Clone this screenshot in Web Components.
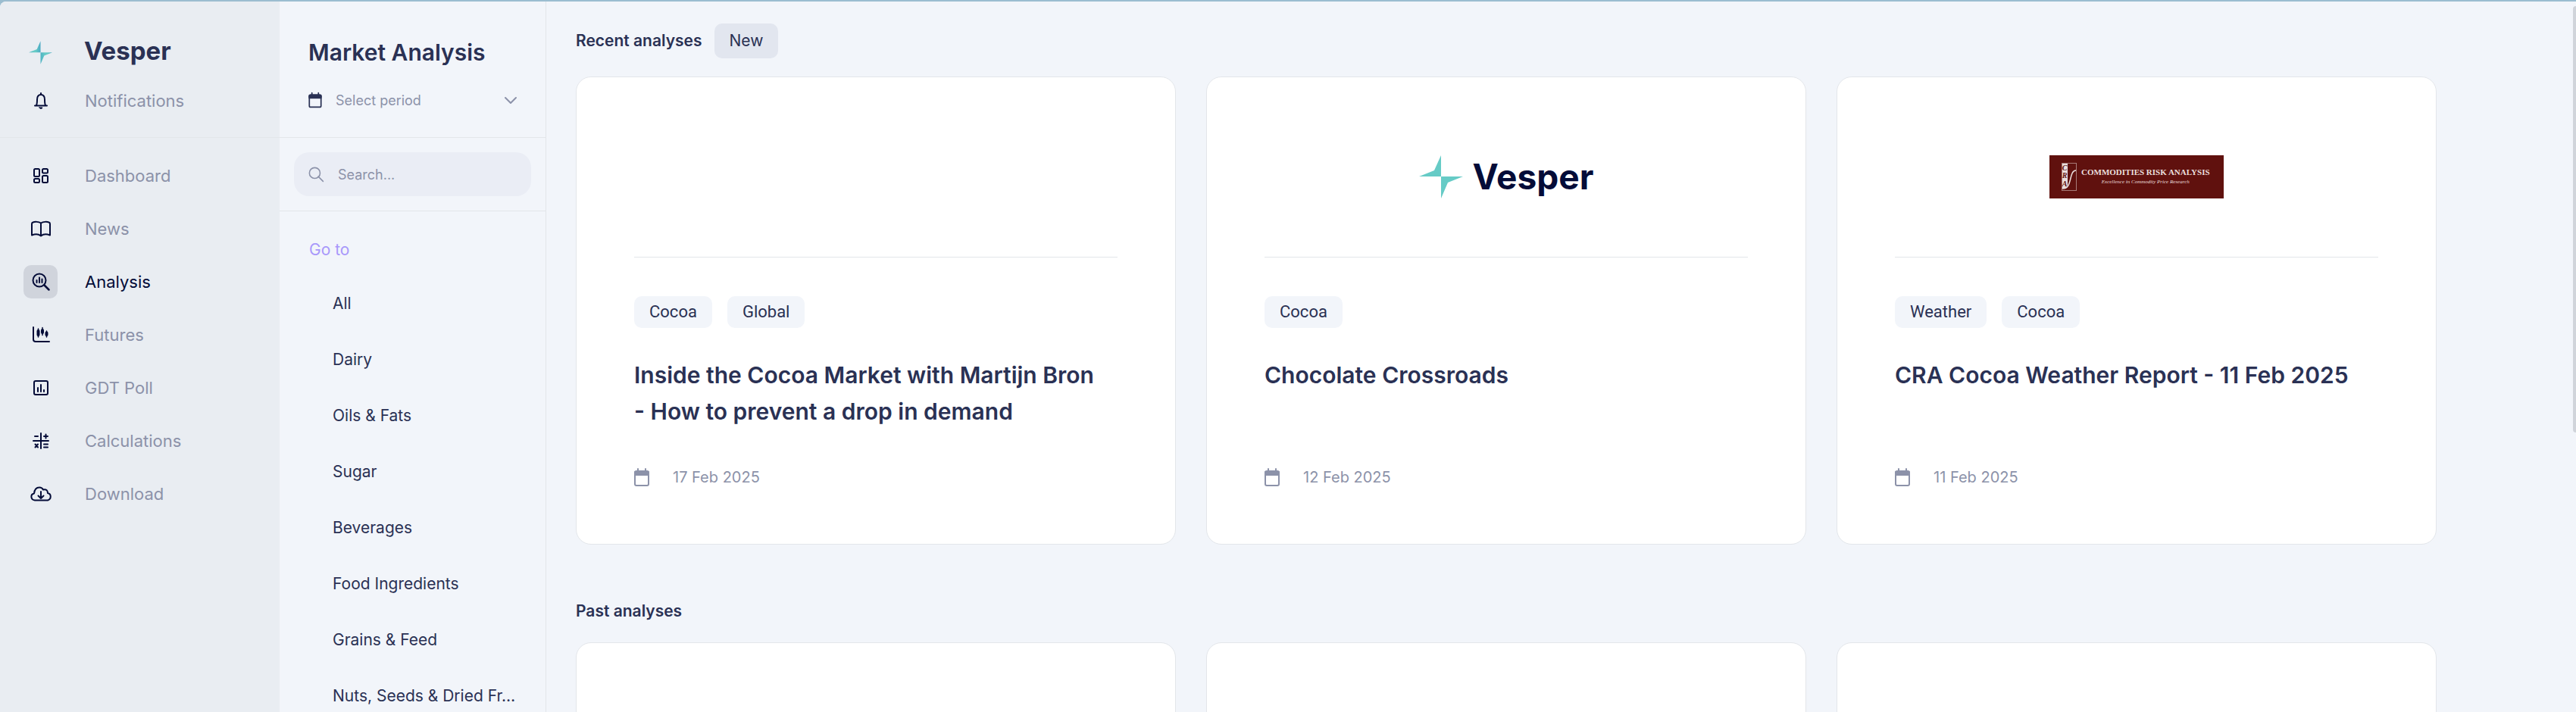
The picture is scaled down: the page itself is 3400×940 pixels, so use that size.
<!DOCTYPE html>
<html lang="en">
<head>
<meta charset="UTF-8">
<meta name="viewport" content="width=device-width, initial-scale=1.0">
<title>Vesper - Market Analysis</title>
<style>
    :root {
        --navy: #040c38;
        --ink: #2a3154;
        --muted: #8c92a9;
        --line: #e3e6ea;
        --page: #f2f5fa;
        --sidebar: #e9edf2;
        --teal: #66cbc6;
        --accent: #a898fa;
    }

    body {
        background: #9bbdd0;
        color: var(--ink);
        font-family: Inter, "Liberation Sans", sans-serif;
        font-size: 21px;
        margin: 0;
    }
</style>
</head>
<body>
<app-shell>
    <side-nav slot="nav">
        <nav-item slot="top" icon="bell">Notifications</nav-item>
        <nav-item icon="dashboard">Dashboard</nav-item>
        <nav-item icon="book">News</nav-item>
        <nav-item icon="analysis" active>Analysis</nav-item>
        <nav-item icon="candles">Futures</nav-item>
        <nav-item icon="poll">GDT Poll</nav-item>
        <nav-item icon="calc">Calculations</nav-item>
        <nav-item icon="cloud">Download</nav-item>
    </side-nav>

    <filter-panel slot="panel" heading="Market Analysis">
        <category-link>All</category-link>
        <category-link>Dairy</category-link>
        <category-link>Oils &amp; Fats</category-link>
        <category-link>Sugar</category-link>
        <category-link>Beverages</category-link>
        <category-link>Food Ingredients</category-link>
        <category-link>Grains &amp; Feed</category-link>
        <category-link>Nuts, Seeds &amp; Dried Fr…</category-link>
    </filter-panel>

    <analysis-section heading="Recent analyses" badge="New">
        <analysis-card tags="Cocoa,Global" date="17 Feb 2025">Inside the Cocoa Market with Martijn Bron - How to prevent a drop in demand</analysis-card>
        <analysis-card tags="Cocoa" date="12 Feb 2025">
            <vesper-logo slot="logo"></vesper-logo>
            Chocolate Crossroads
        </analysis-card>
        <analysis-card tags="Weather,Cocoa" date="11 Feb 2025">
            <cra-logo slot="logo"></cra-logo>
            CRA Cocoa Weather Report - 11 Feb 2025
        </analysis-card>
    </analysis-section>

    <analysis-section heading="Past analyses">
        <analysis-card></analysis-card>
        <analysis-card></analysis-card>
        <analysis-card></analysis-card>
    </analysis-section>
</app-shell>

<script>
const ICONS = {
    bell: `<path d="M14 4v2M6 20.500h16M8 20c1-2 1-4 1-7.500C9 8.500 11 6 14 6s5 2.500 5 6.500c0 3.500 0 5.500 1 7.500" fill="none"/><path d="M12 23h4c-.5 2-3.500 2-4 0z" fill="currentColor" stroke-width="1"/>`,
    dashboard: `<g fill="none"><rect x="5" y="5" width="7" height="10" rx="1.500"/><rect x="16" y="5" width="7" height="5.500" rx="1.500"/><rect x="5" y="18" width="7" height="5" rx="1.500"/><rect x="16" y="14" width="7" height="9" rx="1.500"/></g>`,
    book: `<path d="M14 6.500v17M14 6.500C11 4.500 6 4.500 3.500 5.500Q2 6 2 7.500v15c4-1.500 9-1.500 12 1 3-2.500 8-2.500 12-1v-15q0-1.500-1.500-2C22 4.500 17 4.500 14 6.500z" fill="none"/>`,
    analysis: `<g fill="none"><circle cx="12" cy="12" r="8.500"/><path d="M18.500 18.500l6 6" stroke-width="2.500"/><path d="M8.500 12v3M12 8.500v6.500M15.500 10.500v4.500"/></g>`,
    candles: `<path d="M4 4v16q0 3 3 3h18" fill="none"/><path d="M10.500 6v11M16 4.500v10M21.500 9v8" stroke-width="1.500"/><path d="M10.500 9v5M16 8v3M21.500 11.500v2.500" stroke-width="4"/>`,
    poll: `<g fill="none"><rect x="5" y="5" width="18" height="18" rx="2"/><path d="M10 14v5M14 10v9M18 17v2"/></g>`,
    calc: `<path d="M4 14h20M14 4v20M6 8h4M18 8h5M20.500 5.500v5M18 18.500h5M18 22.500h5M6.500 18.500l3.500 4M10 18.500l-3.500 4" fill="none"/>`,
    cloud: `<path d="M6 22.500c-6-1-6-8-1-9 .5-5 3-8 7-8 2.500 0 4 1 5 3 4-1 6 1 6 4.500 5 1 5 8 0 9.500zM14 11v9M10.500 16.500l3.500 3.500 3.500-3.500" fill="none"/>`,
    calendar: `<path d="M9 3v4M19 3v4M5 9h18" /><rect x="5" y="6" width="18" height="19" rx="2" fill="none"/><path d="M5 7h18v4H5z" fill="currentColor"/>`,
    chevron: `<path d="M7 11l7 7 7-7" fill="none"/>`,
    search: `<path d="M18 18l8 8" fill="none"/><circle cx="12" cy="12" r="9" fill="none"/>`
};

const STAR = `<path d="M29 0v28H0l20-8z"/><path d="M29 28h29l-20 8-9 21z"/>`;

class ShadowElement extends HTMLElement {
    constructor() {
        super();
        this.attachShadow({ mode: 'open' });
    }

    connectedCallback() {
        this.render();
    }
}

class AppIcon extends ShadowElement {
    render() {
        this.shadowRoot.innerHTML = `
            <style>
                :host {
                    display: block;
                    flex-shrink: 0;
                    height: 28px;
                    width: 28px;
                }

                svg {
                    display: block;
                    height: 100%;
                    overflow: visible;
                    stroke: currentColor;
                    stroke-linecap: round;
                    stroke-linejoin: round;
                    stroke-width: 2;
                    width: 100%;
                }
            </style>
            <svg viewBox="0 0 28 28" aria-hidden="true">${ICONS[this.getAttribute('name')]}</svg>
        `;
    }
}

class AppShell extends ShadowElement {
    render() {
        this.shadowRoot.innerHTML = `
            <style>
                :host {
                    background: var(--page);
                    border-radius: 8px 0 0 0;
                    box-sizing: border-box;
                    display: grid;
                    grid-template-columns: 369px 352px minmax(0, 1fr);
                    height: calc(100vh - 2px);
                    margin-top: 2px;
                    overflow: hidden;
                    position: relative;
                }

                main {
                    display: flex;
                    flex-direction: column;
                    gap: 71px;
                    min-height: 0;
                    overflow: hidden;
                    padding: 29px 184px 0 39px;
                }

                .thumb {
                    background: #d0d4da;
                    border-radius: 4px 0 0 4px;
                    height: 60%;
                    position: absolute;
                    right: 0;
                    top: 6px;
                    width: 4px;
                }
            </style>
            <slot name="nav"></slot>
            <slot name="panel"></slot>
            <main><slot></slot></main>
            <div class="thumb"></div>
        `;
    }
}

class SideNav extends ShadowElement {
    render() {
        this.shadowRoot.innerHTML = `
            <style>
                :host {
                    background: var(--sidebar);
                    display: block;
                }

                header {
                    border-bottom: 1px solid var(--line);
                    display: flex;
                    flex-direction: column;
                    gap: 22px;
                    padding: 43px 31px 26px;
                }

                .brand {
                    align-items: center;
                    display: flex;
                    gap: 42px;
                    height: 44px;
                    padding-left: 7px;
                }

                .brand svg {
                    height: 31px;
                    margin-top: 4px;
                    width: 31px;
                }

                .brand strong {
                    font-size: 33px;
                    font-weight: 700;
                    line-height: 44px;
                }

                nav {
                    display: flex;
                    flex-direction: column;
                    gap: 26px;
                    padding: 28px 31px;
                }
            </style>
            <header>
                <div class="brand">
                    <svg viewBox="0 0 58 57" aria-hidden="true">
                        <defs>
                            <linearGradient id="g" x1="0" x2="1">
                                <stop offset="0" stop-color="#4fb3c4"/>
                                <stop offset=".4" stop-color="#66cbc6"/>
                                <stop offset=".6" stop-color="#66cbc6"/>
                                <stop offset="1" stop-color="#4aa9c4"/>
                            </linearGradient>
                        </defs>
                        <g fill="url(#g)">${STAR}</g>
                    </svg>
                    <strong>Vesper</strong>
                </div>
                <slot name="top"></slot>
            </header>
            <nav><slot></slot></nav>
        `;
    }
}

class NavItem extends ShadowElement {
    render() {
        this.shadowRoot.innerHTML = `
            <style>
                :host {
                    display: block;
                }

                a {
                    align-items: center;
                    color: var(--muted);
                    display: flex;
                    font-size: 22px;
                    gap: 36px;
                    line-height: 44px;
                    text-decoration: none;
                }

                .tile {
                    align-items: center;
                    border-radius: 10px;
                    color: var(--navy);
                    display: flex;
                    height: 44px;
                    justify-content: center;
                    width: 45px;
                }

                :host([active]) a {
                    color: var(--navy);
                }

                :host([active]) .tile {
                    background: #d0d4dc;
                }
            </style>
            <a href="#">
                <span class="tile"><app-icon name="${this.getAttribute('icon')}"></app-icon></span>
                <slot></slot>
            </a>
        `;
    }
}

class FilterPanel extends ShadowElement {
    render() {
        this.shadowRoot.innerHTML = `
            <style>
                :host {
                    border-right: 1px solid var(--line);
                    display: block;
                    min-width: 0;
                }

                header {
                    border-bottom: 1px solid var(--line);
                    padding: 43px 32px 29px 35px;
                }

                h1 {
                    font-size: 30px;
                    font-weight: 600;
                    line-height: 48px;
                    margin: 0 0 19px;
                    padding-left: 3px;
                }

                .period {
                    align-items: center;
                    color: var(--muted);
                    display: flex;
                    height: 40px;
                }

                .period app-icon:first-child {
                    color: var(--ink);
                    height: 24px;
                    width: 24px;
                }

                select,
                input {
                    appearance: none;
                    background: none;
                    border: 0;
                    color: var(--muted);
                    flex: 1;
                    font: inherit;
                    font-size: 18px;
                    min-width: 0;
                    outline: 0;
                    padding: 0;
                }

                select {
                    margin-left: 15px;
                }

                .search {
                    border-bottom: 1px solid var(--line);
                    padding: 19px;
                }

                label {
                    align-items: center;
                    background: #eaedf5;
                    border-radius: 20px;
                    color: var(--muted);
                    display: flex;
                    gap: 18px;
                    height: 58px;
                    padding: 0 18px;
                }

                label app-icon {
                    height: 22px;
                    width: 22px;
                }

                input::placeholder {
                    color: var(--muted);
                    opacity: 1;
                }

                nav {
                    padding: 17px 16px 0 39px;
                }

                h2 {
                    color: var(--accent);
                    font-size: 21px;
                    font-weight: 400;
                    line-height: 68px;
                    margin: 0;
                }

                .links {
                    padding-left: 31px;
                }
            </style>
            <header>
                <h1>${this.getAttribute('heading')}</h1>
                <div class="period">
                    <app-icon name="calendar"></app-icon>
                    <select aria-label="Select period"><option>Select period</option></select>
                    <app-icon name="chevron"></app-icon>
                </div>
            </header>
            <div class="search">
                <label>
                    <app-icon name="search"></app-icon>
                    <input type="text" placeholder="Search..." aria-label="Search">
                </label>
            </div>
            <nav>
                <h2>Go to</h2>
                <div class="links"><slot></slot></div>
            </nav>
        `;
    }
}

class CategoryLink extends ShadowElement {
    render() {
        this.shadowRoot.innerHTML = `
            <style>
                :host {
                    display: block;
                }

                a {
                    color: inherit;
                    display: block;
                    line-height: 74px;
                    text-decoration: none;
                    white-space: nowrap;
                }
            </style>
            <a href="#"><slot></slot></a>
        `;
    }
}

class AnalysisSection extends ShadowElement {
    render() {
        const badge = this.getAttribute('badge');

        this.shadowRoot.innerHTML = `
            <style>
                :host {
                    display: block;
                }

                .head {
                    align-items: center;
                    display: flex;
                    gap: 16px;
                    margin-bottom: 24px;
                }

                h2 {
                    font-size: 21px;
                    font-weight: 600;
                    line-height: 34px;
                    margin: 0;
                }

                .badge {
                    background: #e2e6ef;
                    border-radius: 10px;
                    line-height: 46px;
                    padding: 0 20px;
                }

                .grid {
                    display: grid;
                    gap: 40px;
                    grid-template-columns: repeat(3, minmax(0, 1fr));
                }
            </style>
            <div class="head">
                <h2>${this.getAttribute('heading')}</h2>
                ${badge ? `<span class="badge">${badge}</span>` : ''}
            </div>
            <div class="grid"><slot></slot></div>
        `;
    }
}

class AnalysisCard extends ShadowElement {
    render() {
        const tags = (this.getAttribute('tags') || '').split(',').filter(Boolean);
        const date = this.getAttribute('date');

        this.shadowRoot.innerHTML = `
            <style>
                :host {
                    background: #fff;
                    border: 1px solid var(--line);
                    border-radius: 20px;
                    display: block;
                    padding: 38px 76px 74px;
                }

                .media {
                    align-items: center;
                    border-bottom: 1px solid var(--line);
                    display: flex;
                    justify-content: center;
                    min-height: 186px;
                    padding-bottom: 13px;
                }

                .tags {
                    display: flex;
                    gap: 20px;
                    margin-top: 51px;
                    min-height: 42px;
                }

                .tags span {
                    background: var(--page);
                    border-radius: 10px;
                    font-family: Roboto, sans-serif;
                    font-size: 22px;
                    line-height: 42px;
                    padding: 0 20px;
                }

                h3 {
                    font-size: 30px;
                    font-weight: 600;
                    line-height: 48px;
                    margin: 38px 0 49px;
                    min-height: 96px;
                    padding-right: 20px;
                }

                .date {
                    align-items: center;
                    color: var(--muted);
                    display: flex;
                    font-size: 20px;
                    gap: 27px;
                    line-height: 28px;
                    min-height: 28px;
                }

                .date app-icon {
                    margin-left: -4px;
                }
            </style>
            <article>
                <div class="media"><slot name="logo"></slot></div>
                <div class="tags">${tags.map(tag => `<span>${tag}</span>`).join('')}</div>
                <h3><slot></slot></h3>
                <div class="date">${date ? `<app-icon name="calendar"></app-icon><time>${date}</time>` : ''}</div>
            </article>
        `;
    }
}

class VesperLogo extends ShadowElement {
    render() {
        this.shadowRoot.innerHTML = `
            <style>
                :host {
                    align-items: center;
                    color: var(--navy);
                    display: flex;
                    gap: 13px;
                }

                svg {
                    fill: var(--teal);
                    height: 57px;
                    width: 58px;
                }

                strong {
                    font-size: 46px;
                    font-weight: 700;
                    line-height: 56px;
                }
            </style>
            <svg viewBox="0 0 58 57" aria-hidden="true">${STAR}</svg>
            <strong>Vesper</strong>
        `;
    }
}

class CraLogo extends ShadowElement {
    render() {
        this.shadowRoot.innerHTML = `
            <style>
                :host {
                    align-items: center;
                    background: #60110e;
                    box-sizing: border-box;
                    color: #eadfdd;
                    display: flex;
                    font-family: "Liberation Serif", serif;
                    gap: 6px;
                    height: 57px;
                    padding: 0 16px;
                    text-align: center;
                    width: 230px;
                }

                svg {
                    flex-shrink: 0;
                    height: 37px;
                    width: 20px;
                }

                b {
                    display: block;
                    font-size: 11px;
                    line-height: 14px;
                    white-space: nowrap;
                }

                i {
                    display: block;
                    font-size: 7px;
                    line-height: 12px;
                    white-space: nowrap;
                }
            </style>
            <svg viewBox="0 0 20 37" aria-hidden="true">
                <path d="M0 0h8v29q-1 5-8 5z" fill="#eadfdd"/>
                <rect x=".5" y=".5" width="19" height="36" fill="none" stroke="#a87c79"/>
                <path d="M1 34c14 1 8-24 18-24" fill="none" stroke="#eadfdd" stroke-width="1.500"/>
                <g fill="#60110e" font-family="Liberation Serif, serif" font-size="10" font-style="italic" font-weight="700" text-anchor="middle">
                    <text x="4" y="10">C</text>
                    <text x="4" y="20">R</text>
                    <text x="4" y="31">A</text>
                </g>
            </svg>
            <div>
                <b>COMMODITIES RISK ANALYSIS</b>
                <i>Excellence in Commodity Price Research</i>
            </div>
        `;
    }
}

customElements.define('app-icon', AppIcon);
customElements.define('app-shell', AppShell);
customElements.define('side-nav', SideNav);
customElements.define('nav-item', NavItem);
customElements.define('filter-panel', FilterPanel);
customElements.define('category-link', CategoryLink);
customElements.define('analysis-section', AnalysisSection);
customElements.define('analysis-card', AnalysisCard);
customElements.define('vesper-logo', VesperLogo);
customElements.define('cra-logo', CraLogo);
</script>
</body>
</html>
